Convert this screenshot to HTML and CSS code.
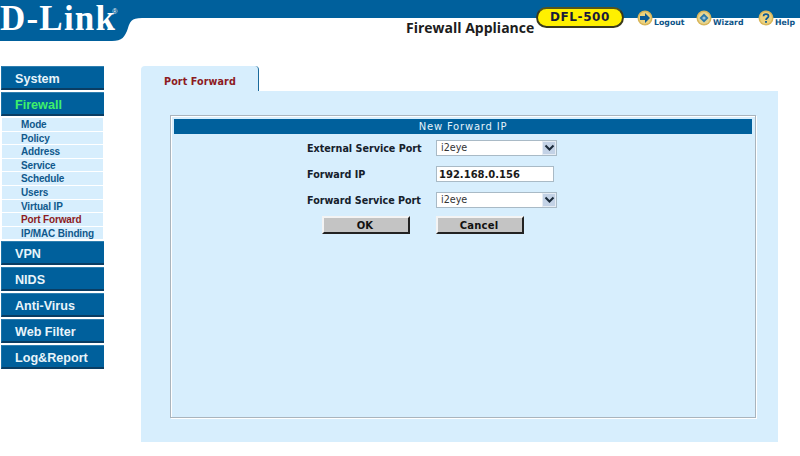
FILE: index.html
```html
<!DOCTYPE html>
<html lang="en">
<head>
<meta charset="utf-8">
<title>Firewall Appliance</title>
<link rel="stylesheet" href="styles.css">
</head>
<body>
<header class="header">
  <svg class="header-bg" width="800" height="42" viewBox="0 0 800 42"><path d="M0 0H800V18H142C131 18 130 22 128 28C125 37 122 41 112 41H0Z" fill="#00609c"/></svg>
  <div class="logo">D-Link<sup class="reg">®</sup></div>
  <div class="product">Firewall Appliance</div>
  <div class="model">DFL-500</div>
  <nav class="tools">
    <a class="tool tool-logout">
      <svg width="16" height="16" viewBox="0 0 16 16"><circle cx="8" cy="8" r="7.5" fill="#d9b65a"/><circle cx="8" cy="8" r="6" fill="#ecd27e"/><path d="M3 6H8V3L13 8L8 13V10H3Z" fill="#0c5a96"/></svg>
      <span>Logout</span>
    </a>
    <a class="tool tool-wizard">
      <svg width="16" height="16" viewBox="0 0 16 16"><circle cx="8" cy="8" r="7.5" fill="#d9b65a"/><circle cx="8" cy="8" r="6" fill="#e6d591"/><path d="M8 3.5L12.500 8L8 12.500L3.500 8Z" fill="#2c79a8"/><circle cx="8" cy="8" r="1.600" fill="#9ac4d8"/></svg>
      <span>Wizard</span>
    </a>
    <a class="tool tool-help">
      <svg width="16" height="16" viewBox="0 0 16 16"><circle cx="8" cy="8" r="7.500" fill="#d9b65a"/><circle cx="8" cy="8" r="6" fill="#ecd27e"/><path d="M5.500 6.200C5.500 3.500 10.500 3.500 10.500 6.200C10.500 8 8 8 8 10" fill="none" stroke="#0c5a96" stroke-width="1.700"/><rect x="7.100" y="11" width="1.800" height="1.800" fill="#0c5a96"/></svg>
      <span>Help</span>
    </a>
  </nav>
</header>
<div class="page">
  <aside class="sidebar">
    <a class="menu">System</a>
    <a class="menu menu-active">Firewall</a>
    <ul class="submenu">
      <li>Mode</li>
      <li>Policy</li>
      <li>Address</li>
      <li>Service</li>
      <li>Schedule</li>
      <li>Users</li>
      <li>Virtual IP</li>
      <li class="current">Port Forward</li>
      <li>IP/MAC Binding</li>
    </ul>
    <a class="menu">VPN</a>
    <a class="menu">NIDS</a>
    <a class="menu">Anti-Virus</a>
    <a class="menu">Web Filter</a>
    <a class="menu">Log&amp;Report</a>
  </aside>
  <main class="main">
    <div class="tab">Port Forward</div>
    <section class="panel">
      <form class="box">
        <h2 class="box-title">New Forward IP</h2>
        <div class="form-grid">
          <label class="field-label">External Service Port</label>
          <div class="select-wrap">
            <select class="select"><option>i2eye</option></select>
            <span class="select-arrow"><svg width="11" height="8" viewBox="0 0 11 8"><path d="M1.500 1.500L5.500 5.500L9.500 1.500" fill="none" stroke="#1a2a3a" stroke-width="2"/></svg></span>
          </div>
          <label class="field-label">Forward IP</label>
          <input class="text-input" type="text" value="192.168.0.156">
          <label class="field-label">Forward Service Port</label>
          <div class="select-wrap">
            <select class="select"><option>i2eye</option></select>
            <span class="select-arrow"><svg width="11" height="8" viewBox="0 0 11 8"><path d="M1.500 1.500L5.500 5.500L9.500 1.500" fill="none" stroke="#1a2a3a" stroke-width="2"/></svg></span>
          </div>
        </div>
        <div class="actions">
          <button class="btn btn-ok" type="button">OK</button>
          <button class="btn btn-cancel" type="button">Cancel</button>
        </div>
      </form>
    </section>
  </main>
</div>
</body>
</html>
```
FILE: styles.css
```css
* { box-sizing: border-box; }
html, body { margin: 0; padding: 0; background: #fff; overflow: hidden; }
body { width: 800px; height: 456px; font-family: "DejaVu Sans", sans-serif; }

.header { position: relative; height: 66px; display: flex; align-items: flex-start; }
.header-bg { position: absolute; left: 0; top: 0; }
.logo { position: relative; width: 406px; font: bold 35px/38px "Liberation Serif", serif; letter-spacing: 1.200px; color: #fff; white-space: nowrap; }
.reg { font: 7px/7px "Liberation Sans", sans-serif; letter-spacing: 0; vertical-align: 16px; margin-left: -4px; }
.product { position: relative; margin-top: 19px; width: 130px; font: bold 14px/18px "Open Sans", sans-serif; color: #1c1c1c; white-space: nowrap; }
.model { position: relative; margin-top: 7px; width: 88px; height: 21px; border-radius: 11px; background: #fff000; border: 2px solid #3a3a1c; border-top-color: #55551c; text-align: center; font: bold 12px/17px "DejaVu Sans", sans-serif; letter-spacing: 0.600px; color: #1a1a3a; }
.tools { position: relative; display: flex; margin-left: 13px; margin-top: 10px; }
.tool { display: flex; align-items: flex-start; color: #0d5488; font: bold 7.800px/10px "DejaVu Sans", sans-serif; }
.tool span { margin-top: 8px; margin-left: 1px; }
.tool-logout { width: 59px; }
.tool-wizard { width: 62px; }
.tool-help { width: 40px; }

.page { display: flex; align-items: flex-start; }
.sidebar { width: 103px; margin-left: 1px; display: flex; flex-direction: column; }
.menu { display: block; height: 24px; margin-bottom: 2px; padding-left: 13px; background: #00609c; border-top: 1px solid #2f7fb0; border-bottom: 2px solid #0a3d63; border-left: 1px solid #1a72a8; color: #e8f4fa; font: bold 12.600px/24px "Liberation Sans", sans-serif; white-space: nowrap; }
.menu-active { color: #3ff06a; }
.submenu { list-style: none; margin: 0 0 1px; padding: 0 1px; }
.submenu li { height: 12.600px; margin-bottom: 1px; padding-left: 19px; background: #d7eefd; color: #10598c; font: bold 10px/13px "Liberation Sans", sans-serif; letter-spacing: -0.150px; white-space: nowrap; }
.submenu .current { color: #8d1a22; }

.main { margin-left: 37px; width: 637px; }
.tab { width: 118px; height: 25px; background: #d7eefd; border-right: 1px solid #1b6a9c; border-radius: 4px 4px 0 0; padding: 2px 0 0 23px; color: #8d1a22; font: bold 9.600px/27px "DejaVu Sans", sans-serif; letter-spacing: 0.100px; white-space: nowrap; }
.panel { height: 351px; background: #d7eefd; padding: 24px 22px 24px 29px; }
.box { height: 303px; border: 1px solid #a9b4bd; box-shadow: inset 1px 1px 0 #fff, 1px 1px 0 #fff; padding: 3px; }
.box-title { margin: 0; height: 15px; background: #00609c; color: #e4f3fb; text-align: center; font: normal 10px/15px "DejaVu Sans", sans-serif; letter-spacing: 0.800px; }
.form-grid { display: grid; grid-template-columns: 129px 121px; grid-auto-rows: 16px; align-items: center; row-gap: 10px; padding: 6px 0 0 133px; }
.field-label { height: 16px; font: bold 9.600px/17px "DejaVu Sans", sans-serif; color: #15202b; white-space: nowrap; }
.select-wrap { position: relative; width: 121px; height: 16px; }
.select { appearance: none; -webkit-appearance: none; display: block; width: 100%; height: 16px; margin: 0; padding: 0 0 0 4px; border: 1px solid #a9bac6; border-radius: 0; background: #fff; color: #333; font: 9.600px/14px "DejaVu Sans", sans-serif; }
.select-arrow { position: absolute; right: 1px; top: 1px; width: 14px; height: 14px; display: flex; align-items: center; justify-content: center; background: #c3d2e6; border: 1px solid #e6edf5; pointer-events: none; }
.text-input { display: block; width: 118px; height: 16px; margin: 0; padding: 0 0 0 2px; border: 1px solid #a9bac6; border-radius: 0; background: #fff; color: #1a1a1a; font: bold 10px/14px "DejaVu Sans", sans-serif; outline: 0; }
.actions { display: flex; padding: 8px 0 0 148px; }
.btn { display: block; width: 88px; height: 18px; margin: 0; padding: 1px 2px 0 0; background: #c4c4c4; border: 2px solid; border-color: #f4f4f4 #222 #222 #f4f4f4; border-radius: 0; color: #111; font: bold 10px/14px "DejaVu Sans", sans-serif; letter-spacing: 0.200px; }
.btn-ok { margin-right: 26px; }
```
